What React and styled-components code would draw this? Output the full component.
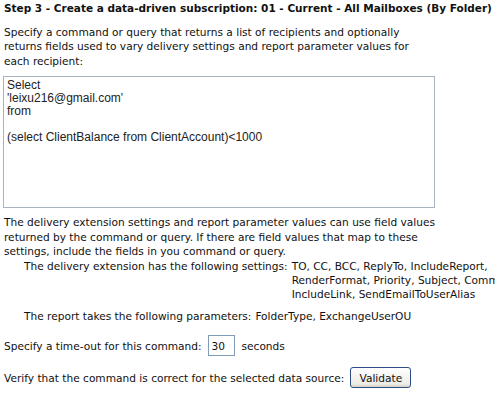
import React from 'react';
import styled, { createGlobalStyle } from 'styled-components';

const GlobalStyle = createGlobalStyle`
  html, body {
    margin: 0;
    padding: 0;
    background: #ffffff;
    overflow: hidden;
  }
  body {
    font-family: "DejaVu Sans", Verdana, sans-serif;
    font-size: 10.6px;
    color: #111;
  }
`;

const query = `Select
'leixu216@gmail.com'
from

(select ClientBalance from ClientAccount)<1000`;

function App() {
  return (
    <>
      <GlobalStyle />
      <Page>
        <Title>Step 3 - Create a data-driven subscription: 01 - Current - All Mailboxes (By Folder)</Title>
        <Text $top={11}>
          Specify a command or query that returns a list of recipients and optionally<br />
          returns fields used to vary delivery settings and report parameter values for<br />
          each recipient:
        </Text>
        <QueryBox defaultValue={query} spellCheck={false} />
        <Text $top={7}>
          The delivery extension settings and report parameter values can use field values<br />
          returned by the command or query. If there are field values that map to these<br />
          settings, include the fields in you command or query.
        </Text>
        <Info>
          <InfoRow>
            <InfoLabel>The delivery extension has the following settings:</InfoLabel>
            <InfoValue>TO, CC, BCC, ReplyTo, IncludeReport, RenderFormat, Priority, Subject, Comment, IncludeLink, SendEmailToUserAlias</InfoValue>
          </InfoRow>
          <InfoRow>
            <InfoLabel>The report takes the following parameters:</InfoLabel>
            <InfoValue>FolderType, ExchangeUserOU</InfoValue>
          </InfoRow>
        </Info>
        <Line $gap={12}>
          Specify a time-out for this command:
          <TimeoutInput defaultValue="30" />
          seconds
        </Line>
        <Line $gap={11}>
          Verify that the command is correct for the selected data source:
          <ValidateButton>Validate</ValidateButton>
        </Line>
      </Page>
    </>
  );
}

const Page = styled.div`
  width: 495px;
  height: 400px;
  padding: 2px 4px;
  box-sizing: border-box;
  display: flex;
  flex-direction: column;
  overflow: hidden;
`;

const Title = styled.h1`
  margin: 0;
  font-size: 10.5px;
  font-weight: bold;
  white-space: nowrap;
`;

const Text = styled.p`
  margin: ${p => p.$top}px 0 0 0;
  line-height: 14.4px;
  white-space: nowrap;
`;

const QueryBox = styled.textarea`
  margin: 8px 0 0 -1px;
  width: 432px;
  height: 132px;
  box-sizing: border-box;
  padding: 2px 3px;
  border: 1px solid #a9b3c2;
  font-family: "Liberation Sans", Arial, sans-serif;
  font-size: 12px;
  line-height: 13px;
  color: #222;
  resize: none;
  overflow-y: scroll;
  outline: none;
`;

const Info = styled.div`
  margin-top: 1px;
  padding-left: 20px;
  display: flex;
  flex-direction: column;
  gap: 8px;
`;

const InfoRow = styled.div`
  display: flex;
  line-height: 14px;
  gap: 4px;
`;

const InfoLabel = styled.span`
  white-space: nowrap;
`;

const InfoValue = styled.span`
  flex: 0 0 250px;
  width: 250px;
`;

const Line = styled.div`
  display: flex;
  align-items: center;
  margin-top: ${p => p.$gap}px;
  white-space: nowrap;
`;

const TimeoutInput = styled.input`
  width: 27px;
  height: 21px;
  box-sizing: border-box;
  margin: 0 7px 0 6px;
  padding: 0 3px;
  border: 1px solid #7f9db9;
  font-family: "DejaVu Sans", Verdana, sans-serif;
  font-size: 10.6px;
  color: #111;
`;

const ValidateButton = styled.button`
  margin-left: 6px;
  width: 61px;
  height: 21px;
  border: 1px solid #2d4f86;
  border-radius: 3px;
  background: linear-gradient(#ffffff, #ecebe6 85%, #d6d0c5);
  font-family: "DejaVu Sans", Verdana, sans-serif;
  font-size: 10.6px;
  color: #111;
  padding: 0;
`;

export default App;
